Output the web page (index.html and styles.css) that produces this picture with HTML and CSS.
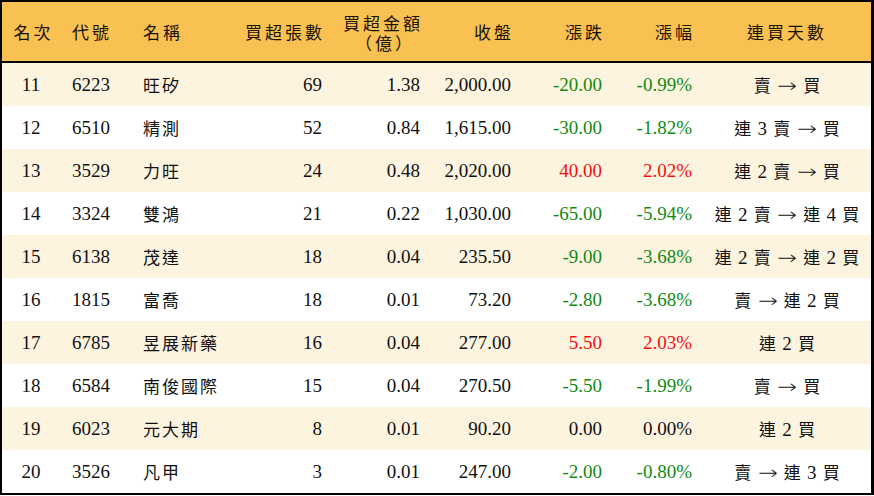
FILE: index.html
```html
<!DOCTYPE html>
<html lang="zh-Hant">
<head>
<meta charset="utf-8">
<title>買超排行</title>
<link rel="stylesheet" href="styles.css">
</head>
<body>
<table class="rank">
  <colgroup>
    <col class="c-rank"><col class="c-code"><col class="c-name"><col class="c-vol"><col class="c-amt"><col class="c-close"><col class="c-chg"><col class="c-pct"><col class="c-days">
  </colgroup>
  <thead>
    <tr>
      <th class="ctr">名次</th>
      <th class="lft">代號</th>
      <th class="lft">名稱</th>
      <th class="rgt">買超張數</th>
      <th class="rgt"><span class="two"><span class="l1">買超金額</span><span class="l2">（億）</span></span></th>
      <th class="rgt">收盤</th>
      <th class="rgt">漲跌</th>
      <th class="rgt">漲幅</th>
      <th class="ctr">連買天數</th>
    </tr>
  </thead>
  <tbody>
    <tr><td class="ctr">11</td><td class="lft">6223</td><td class="lft cjk">旺矽</td><td class="rgt">69</td><td class="rgt">1.38</td><td class="rgt">2,000.00</td><td class="rgt dn">-20.00</td><td class="rgt dn">-0.99%</td><td class="ctr cjk">賣 <span class="ar">→</span> 買</td></tr>
    <tr><td class="ctr">12</td><td class="lft">6510</td><td class="lft cjk">精測</td><td class="rgt">52</td><td class="rgt">0.84</td><td class="rgt">1,615.00</td><td class="rgt dn">-30.00</td><td class="rgt dn">-1.82%</td><td class="ctr cjk">連 <span class="n">3</span> 賣 <span class="ar">→</span> 買</td></tr>
    <tr><td class="ctr">13</td><td class="lft">3529</td><td class="lft cjk">力旺</td><td class="rgt">24</td><td class="rgt">0.48</td><td class="rgt">2,020.00</td><td class="rgt up">40.00</td><td class="rgt up">2.02%</td><td class="ctr cjk">連 <span class="n">2</span> 賣 <span class="ar">→</span> 買</td></tr>
    <tr><td class="ctr">14</td><td class="lft">3324</td><td class="lft cjk">雙鴻</td><td class="rgt">21</td><td class="rgt">0.22</td><td class="rgt">1,030.00</td><td class="rgt dn">-65.00</td><td class="rgt dn">-5.94%</td><td class="ctr cjk">連 <span class="n">2</span> 賣 <span class="ar">→</span> 連 <span class="n">4</span> 買</td></tr>
    <tr><td class="ctr">15</td><td class="lft">6138</td><td class="lft cjk">茂達</td><td class="rgt">18</td><td class="rgt">0.04</td><td class="rgt">235.50</td><td class="rgt dn">-9.00</td><td class="rgt dn">-3.68%</td><td class="ctr cjk">連 <span class="n">2</span> 賣 <span class="ar">→</span> 連 <span class="n">2</span> 買</td></tr>
    <tr><td class="ctr">16</td><td class="lft">1815</td><td class="lft cjk">富喬</td><td class="rgt">18</td><td class="rgt">0.01</td><td class="rgt">73.20</td><td class="rgt dn">-2.80</td><td class="rgt dn">-3.68%</td><td class="ctr cjk">賣 <span class="ar">→</span> 連 <span class="n">2</span> 買</td></tr>
    <tr><td class="ctr">17</td><td class="lft">6785</td><td class="lft cjk">昱展新藥</td><td class="rgt">16</td><td class="rgt">0.04</td><td class="rgt">277.00</td><td class="rgt up">5.50</td><td class="rgt up">2.03%</td><td class="ctr cjk">連 <span class="n">2</span> 買</td></tr>
    <tr><td class="ctr">18</td><td class="lft">6584</td><td class="lft cjk">南俊國際</td><td class="rgt">15</td><td class="rgt">0.04</td><td class="rgt">270.50</td><td class="rgt dn">-5.50</td><td class="rgt dn">-1.99%</td><td class="ctr cjk">賣 <span class="ar">→</span> 買</td></tr>
    <tr><td class="ctr">19</td><td class="lft">6023</td><td class="lft cjk">元大期</td><td class="rgt">8</td><td class="rgt">0.01</td><td class="rgt">90.20</td><td class="rgt">0.00</td><td class="rgt">0.00%</td><td class="ctr cjk">連 <span class="n">2</span> 買</td></tr>
    <tr><td class="ctr">20</td><td class="lft">3526</td><td class="lft cjk">凡甲</td><td class="rgt">3</td><td class="rgt">0.01</td><td class="rgt">247.00</td><td class="rgt dn">-2.00</td><td class="rgt dn">-0.80%</td><td class="ctr cjk">賣 <span class="ar">→</span> 連 <span class="n">3</span> 買</td></tr>
  </tbody>
</table>
</body>
</html>
```

FILE: styles.css
```css
html, body {
  margin: 0;
  padding: 0;
  background: #ffffff;
}

.rank {
  width: 874px;
  border-collapse: separate;
  border-spacing: 0;
  table-layout: fixed;
  border-style: solid;
  border-color: #000;
  border-width: 2px 3px 2px 2px;
  font-family: "Liberation Serif", "Noto Sans CJK TC", serif;
  font-size: 19px;
  color: #111;
}

.c-rank { width: 60px; }
.c-code { width: 73px; }
.c-name { width: 95px; }
.c-vol { width: 100px; }
.c-amt { width: 98px; }
.c-close { width: 91px; }
.c-chg { width: 91px; }
.c-pct { width: 90px; }
.c-days { width: 171px; }

.rank th {
  height: 59px;
  padding: 0;
  background: #f8c152;
  border-bottom: 2px solid #000;
  font-family: "Noto Sans CJK TC", sans-serif;
  font-weight: 400;
  font-size: 17px;
  letter-spacing: 3px;
  color: #1a1208;
  vertical-align: middle;
  line-height: 20px;
}

.rank th.lft { padding-left: 10px; }
.rank th.rgt { padding-right: 5px; }
.rank th.ctr { padding-left: 3px; }
.rank th:nth-child(3) { padding-left: 8px; }

.two {
  display: inline-flex;
  flex-direction: column;
  align-items: center;
  gap: 1px;
  margin-top: 1px;
}

.l1, .l2 {
  display: block;
  line-height: 19px;
}

.l2 { padding-left: 4px; }

.rank td {
  height: 43px;
  padding: 0;
  vertical-align: middle;
  white-space: nowrap;
}

.rank tbody tr:nth-child(odd) td { background: #fdf4e0; }
.rank tbody tr:nth-child(even) td { background: #ffffff; }

.lft { text-align: left; }
.rgt { text-align: right; }
.ctr { text-align: center; }

.rank td.lft { padding-left: 10px; }
.rank td:nth-child(3) { padding-left: 8px; }
.rank td.rgt { padding-right: 8px; }
.rank td:first-child { padding-right: 2px; }

.rank td.cjk {
  font-size: 17px;
  letter-spacing: 2px;
}

.rank td.ctr.cjk {
  padding-left: 4px;
  letter-spacing: 1px;
}

.n {
  font-family: "Liberation Serif", serif;
  font-size: 19px;
}

.ar {
  font-family: "DejaVu Sans", sans-serif;
  font-size: 19px;
  font-weight: 300;
  display: inline-block;
  transform: scaleX(1.25);
  margin: 0 2px;
}

.dn { color: #128a12; }
.up { color: #f01010; }
```
